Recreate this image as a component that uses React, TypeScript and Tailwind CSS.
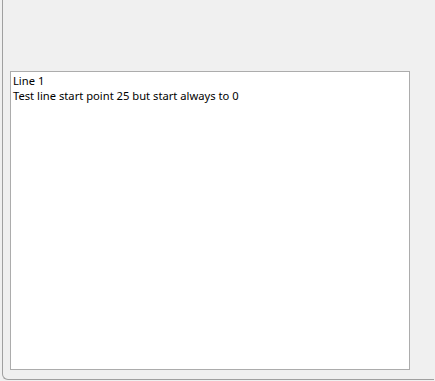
import React from "react";

export default function App() {
  return (
    <div className="w-[435px] h-[381px] bg-[#f0f0f0] overflow-hidden">
      <div className="ml-[2px] w-[432px] h-[380px] border-l border-b border-[#a0a0a0] rounded-bl-[6px]">
        <div className="ml-[7px] pt-[71px]">
          <div
            className="w-[400px] h-[299px] bg-white border border-[#acacac] pl-[2px] pt-[1px] text-[11.2px] leading-[15px] text-black"
            style={{ fontFamily: '"Noto Sans", "Open Sans", sans-serif' }}
          >
            <p>Line 1</p>
            <p>Test line start point 25 but start always to 0</p>
          </div>
        </div>
      </div>
    </div>
  );
}
